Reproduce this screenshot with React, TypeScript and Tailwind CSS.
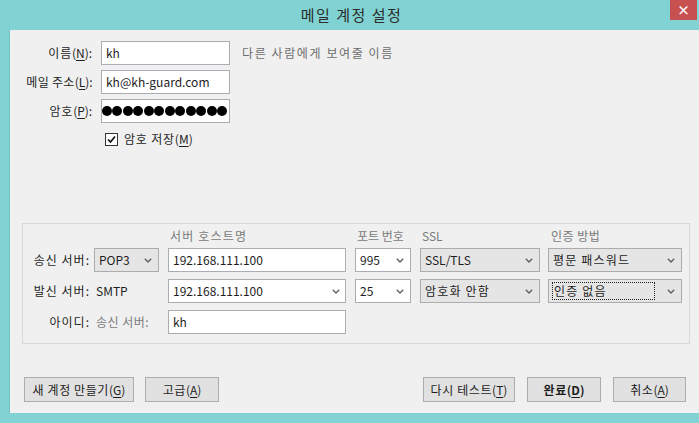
import React from "react"

const font = { fontFamily: '"Noto Sans CJK KR", "Noto Sans", sans-serif' }

function Chevron() {
    return (
        <svg width="8" height="5" viewBox="0 0 8 5" className="shrink-0">
            <polyline points="0.8,0.8 4,4 7.2,0.8" fill="none" stroke="#606060" strokeWidth="1.4" />
        </svg>
    )
}

function Key({ k }: { k: string }) {
    return <span className="tracking-normal">(<u className="underline-offset-2">{k}</u>)</span>
}

function TextBox({ w, children, combo }: { w: string; children?: React.ReactNode; combo?: boolean }) {
    return (
        <div className={`${w} h-[24px] bg-white border border-[#abadb3] flex items-center pl-[4px] pr-[5px] justify-between`}>
            <span>{children}</span>
            {combo && <Chevron />}
        </div>
    )
}

function Select({ w, children, white, focus }: { w: string; children: React.ReactNode; white?: boolean; focus?: boolean }) {
    return (
        <div className={`${w} h-[24px] border ${white ? 'bg-white border-[#abadb3]' : 'bg-[#e5e5e5] border-[#acacac]'} flex items-center justify-between pl-[3px] pr-[6px]`}>
            {focus ? (
                <span className="border border-dotted border-[#222] h-[18px] flex-1 mr-[12px] flex items-center pl-[1px]">{children}</span>
            ) : (
                <span className="pl-[1px]">{children}</span>
            )}
            <Chevron />
        </div>
    )
}

function Button({ w, children, bold }: { w: string; children: React.ReactNode; bold?: boolean }) {
    return (
        <div className={`${w} h-[25px] bg-[#e1e1e1] border border-[#adadad] flex items-center justify-center tracking-[0.6px] ${bold ? 'font-bold' : ''}`}>
            {children}
        </div>
    )
}

export default function App() {
    return (
        <div className="w-[699px] h-[423px] bg-[#80d3d2] flex flex-col text-[12px] text-[#1e1e1e] overflow-hidden" style={font}>
            {/* Title bar */}
            <div className="h-[30px] shrink-0 flex items-center justify-center relative">
                <span className="text-[15px] text-[#2b2b2b] tracking-[1.5px] pl-[4px]">메일 계정 설정</span>
                <div className="absolute top-0 right-[2px] w-[27px] h-[20px] bg-[#c75050] flex items-center justify-center text-white text-[13px] font-bold">×</div>
            </div>

            {/* Body */}
            <div className="ml-[9px] mb-[10px] flex-1 bg-[#f0f0f0] border-l border-[#74c2c0] flex flex-col pl-[12px]">
                <div className="pt-[11px] flex flex-col gap-[5px]">
                    <div className="flex items-center">
                        <span className="w-[71px] text-right tracking-[0.8px]">이름<Key k="N" />:</span>
                        <div className="ml-[8px]"><TextBox w="w-[129px]">kh</TextBox></div>
                        <span className="ml-[12px] text-[#6d6d6d] tracking-[1.6px]">다른 사람에게 보여줄 이름</span>
                    </div>
                    <div className="flex items-center">
                        <span className="w-[71px] text-right whitespace-nowrap tracking-[0.3px]">메일 주소<Key k="L" />:</span>
                        <div className="ml-[8px]"><TextBox w="w-[129px]">kh@kh-guard.com</TextBox></div>
                    </div>
                    <div className="flex items-center">
                        <span className="w-[71px] text-right tracking-[0.8px]">암호<Key k="P" />:</span>
                        <div className="ml-[8px] w-[129px] h-[24px] bg-white border border-[#abadb3] overflow-hidden flex items-center justify-end gap-[0.5px] pr-[2px]">
                            {Array.from({ length: 13 }).map((_, i) => (
                                <div key={i} className="w-[10px] h-[10px] rounded-full bg-black shrink-0" />
                            ))}
                        </div>
                    </div>
                </div>

                <div className="mt-[8px] ml-[83px] flex items-center h-[16px]">
                    <div className="w-[13px] h-[13px] bg-white border border-[#333] flex items-center justify-center">
                        <svg width="9" height="9" viewBox="0 0 9 9">
                            <polyline points="1,4.5 3.5,7 8,1.5" fill="none" stroke="#111" strokeWidth="1.7" />
                        </svg>
                    </div>
                    <span className="ml-[6px] tracking-[0.8px]">암호 저장<Key k="M" /></span>
                </div>

                {/* Server group */}
                <div className="mt-[76px] w-[668px] border border-[#d8d8d8] pt-[4px] pb-[9px] flex flex-col">
                    <div className="flex h-[16px] items-center text-[#7a7a7a]">
                        <div className="w-[71px]" />
                        <div className="w-[74px]" />
                        <div className="w-[187px] pl-[2px] tracking-[1.2px]">서버 호스트명</div>
                        <div className="w-[65px] pl-[2px]">포트 번호</div>
                        <div className="w-[128px] pl-[2px]">SSL</div>
                        <div className="w-[134px] pl-[3px] tracking-[0.5px]">인증 방법</div>
                    </div>
                    <div className="mt-[4px] flex flex-col gap-[7px]">
                        <div className="flex items-center">
                            <div className="w-[71px] text-right pr-[4px] tracking-[1px]">송신 서버:</div>
                            <div className="w-[74px]"><Select w="w-[65px]">POP3</Select></div>
                            <div className="w-[187px]"><TextBox w="w-[178px]">192.168.111.100</TextBox></div>
                            <div className="w-[65px]"><Select w="w-[56px]" white>995</Select></div>
                            <div className="w-[128px]"><Select w="w-[120px]">SSL/TLS</Select></div>
                            <div className="w-[134px]"><Select w="w-[134px]"><span className="tracking-[1.2px]">평문 패스워드</span></Select></div>
                        </div>
                        <div className="flex items-center">
                            <div className="w-[71px] text-right pr-[4px] tracking-[1px]">발신 서버:</div>
                            <div className="w-[74px] pl-[2px]">SMTP</div>
                            <div className="w-[187px]"><TextBox w="w-[178px]" combo>192.168.111.100</TextBox></div>
                            <div className="w-[65px]"><Select w="w-[56px]" white>25</Select></div>
                            <div className="w-[128px]"><Select w="w-[120px]"><span className="tracking-[1.2px]">암호화 안함</span></Select></div>
                            <div className="w-[134px]"><Select w="w-[134px]" focus><span className="tracking-[1.2px]">인증 없음</span></Select></div>
                        </div>
                        <div className="flex items-center">
                            <div className="w-[71px] text-right pr-[4px] tracking-[1px]">아이디:</div>
                            <div className="w-[74px] pl-[2px] text-[#7a7a7a] tracking-[0.5px]">송신 서버:</div>
                            <div className="w-[187px]"><TextBox w="w-[178px]">kh</TextBox></div>
                        </div>
                    </div>
                </div>

                {/* Buttons */}
                <div className="mt-[33px] w-[668px] flex justify-between pl-[2px] pr-[4px]">
                    <div className="flex gap-[11px]">
                        <Button w="w-[110px]">새 계정 만들기<Key k="G" /></Button>
                        <Button w="w-[74px]">고급<Key k="A" /></Button>
                    </div>
                    <div className="flex gap-[12px]">
                        <Button w="w-[92px]">다시 테스트<Key k="T" /></Button>
                        <Button w="w-[74px]" bold>완료<Key k="D" /></Button>
                        <Button w="w-[73px]">취소<Key k="A" /></Button>
                    </div>
                </div>
            </div>
        </div>
    )
}
